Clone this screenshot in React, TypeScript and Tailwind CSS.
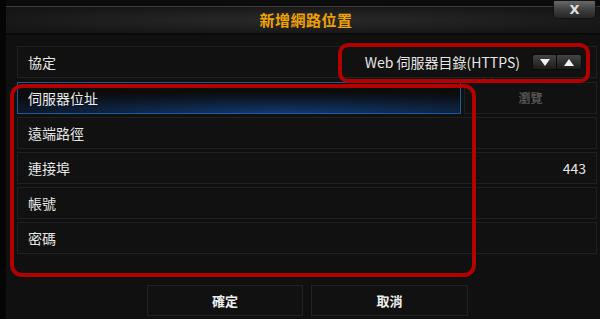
// 新增網路位置 對話框（含紅色標註框）
import React from 'react';

const FONT = { fontFamily: '"Noto Sans CJK TC", "Noto Sans", "Liberation Sans", sans-serif' };

const fields: { label: string; value?: string }[] = [
  { label: '遠端路徑' },
  { label: '連接埠', value: '443' },
  { label: '帳號' },
  { label: '密碼' },
];

const Row: React.FC<{ label: string; value?: string }> = ({ label, value }) => (
  <div className="h-[32px] flex items-center justify-between px-[10px] bg-[#111111] border border-[#202020]">
    <span className="text-[14px] text-[#e6e6e6]">{label}</span>
    {value && <span className="text-[14px] text-[#e6e6e6]">{value}</span>}
  </div>
);

const Tri: React.FC<{ up?: boolean }> = ({ up }) => (
  <svg width="10" height="7" viewBox="0 0 10 7">
    <path d={up ? 'M0 7 L5 0 L10 7 Z' : 'M0 0 L10 0 L5 7 Z'} fill="#f2f2f2" />
  </svg>
);

export default function App() {
  return (
    <div className="w-[600px] h-[319px] bg-black relative overflow-hidden flex" style={FONT}>
      <div className="w-[6px] bg-[#050505]" />
      <div className="flex-1 flex flex-col bg-[#101010]">
        {/* 上方背景條 */}
        <div className="h-[6px] bg-[#0b0b0b]" />
        {/* 標題列 */}
        <div className="h-[29px] flex items-center justify-center border-t border-[#3a3a3a] border-b-2 border-b-[#0a0a0a] bg-[radial-gradient(ellipse_at_center,#2a2a2a,#161616_80%)]">
          <span className="text-[15px] font-bold text-[#f0a202] ml-[6px] tracking-[0.5px]">新增網路位置</span>
        </div>

        <div className="flex flex-col pl-[11px] pr-[3px] pt-[11px]">
          {/* 協定 */}
          <div className="h-[32px] flex items-center justify-between pl-[10px] pr-[14px] bg-[#111111] border border-[#202020]">
            <span className="text-[14px] text-[#e6e6e6]">協定</span>
            <div className="flex items-center gap-[12px]">
              <span className="text-[14px] text-[#e6e6e6]">Web 伺服器目錄(HTTPS)</span>
              <div className="flex h-[16px] rounded-[3px] overflow-hidden border border-[#0a0a0a]">
                <div className="w-[24px] flex items-center justify-center bg-gradient-to-b from-[#444] to-[#1c1c1c] border-r border-[#0a0a0a]"><Tri /></div>
                <div className="w-[24px] flex items-center justify-center bg-gradient-to-b from-[#444] to-[#1c1c1c]"><Tri up /></div>
              </div>
            </div>
          </div>

          {/* 伺服器位址 + 瀏覽 */}
          <div className="flex gap-[3px] mt-[4px]">
            <div className="w-[444px] h-[32px] flex items-center px-[10px] border border-[#1f5a9c] bg-[radial-gradient(ellipse_90%_70%_at_60%_100%,#0f3a6e,#0c1626_70%,#0c0c0c)]">
              <span className="text-[14px] text-[#ececec]">伺服器位址</span>
            </div>
            <div className="flex-1 h-[32px] flex items-center justify-center bg-[#111111] border border-[#202020]">
              <span className="text-[12px] font-bold text-[#555555]">瀏覽</span>
            </div>
          </div>

          <div className="flex flex-col gap-[3px] mt-[3px]">
            {fields.map(f => <Row key={f.label} label={f.label} value={f.value} />)}
          </div>

          {/* 確定 / 取消 */}
          <div className="flex gap-[8px] ml-[130px] mt-[31px]">
            <div className="w-[156px] h-[31px] flex items-center justify-center bg-[#111111] border border-[#222]">
              <span className="text-[13px] font-bold text-[#eeeeee]">確定</span>
            </div>
            <div className="w-[157px] h-[31px] flex items-center justify-center bg-[#111111] border border-[#222]">
              <span className="text-[13px] font-bold text-[#eeeeee]">取消</span>
            </div>
          </div>
        </div>
      </div>

      {/* 關閉按鈕 */}
      <div className="absolute left-[553px] top-[0px] w-[43px] h-[19px] rounded-b-[4px] rounded-t-[2px] bg-gradient-to-b from-[#6a6a6a] via-[#404040] to-[#262626] border border-[#111] flex items-center justify-center">
        <span className="text-[13px] font-bold text-[#e0e0e0] leading-none" style={{ fontFamily: '"DejaVu Sans", sans-serif' }}>X</span>
      </div>

      {/* 紅色標註框 */}
      <div className="absolute left-[338px] top-[43px] w-[252px] h-[40px] border-[4px] border-[#b30000] rounded-[10px]" />
      <div className="absolute left-[10px] top-[84px] w-[466px] h-[193px] border-[4px] border-[#b30000] rounded-[12px]" />
    </div>
  );
}
